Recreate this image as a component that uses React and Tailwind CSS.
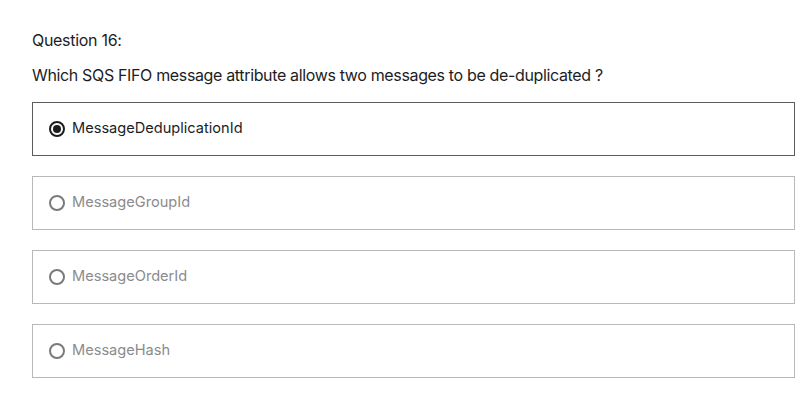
import React, { useState } from 'react';

const options = [
  'MessageDeduplicationId',
  'MessageGroupId',
  'MessageOrderId',
  'MessageHash',
];

export default function App() {
  const [selected, setSelected] = useState(0);

  return (
    <div className="min-h-screen bg-white text-[#1c1d1f]" style={{ fontFamily: 'Inter, "Noto Sans", sans-serif' }}>
      <div className="pl-8 pr-[7px] pt-[28px]">
        <div className="text-base leading-6 tracking-[-0.3px]">Question 16:</div>
        <div className="mt-[11px] text-base leading-6 tracking-[-0.35px]">
          Which SQS FIFO message attribute allows two messages to be de-duplicated ?
        </div>

        <div className="mt-[15px] flex flex-col gap-[20px]">
          {options.map((opt, i) => {
            const active = selected === i;
            return (
              <label
                key={opt}
                onClick={() => setSelected(i)}
                className={`flex h-[54px] items-center gap-[7px] border pl-4 cursor-pointer ${
                  active ? 'border-[#5a5c60]' : 'border-[#b8b8b8]'
                }`}
              >
                <span
                  className={`flex h-4 w-4 items-center justify-center rounded-full border-2 ${
                    active ? 'border-[#1c1d1f]' : 'border-[#7a7a7a]'
                  }`}
                >
                  {active && <span className="h-2 w-2 rounded-full bg-[#1c1d1f]" />}
                </span>
                <span className={`text-[14.6px] ${active ? 'text-[#1c1d1f]' : 'text-[#8a8b8d]'}`}>{opt}</span>
              </label>
            );
          })}
        </div>
      </div>
    </div>
  );
}
